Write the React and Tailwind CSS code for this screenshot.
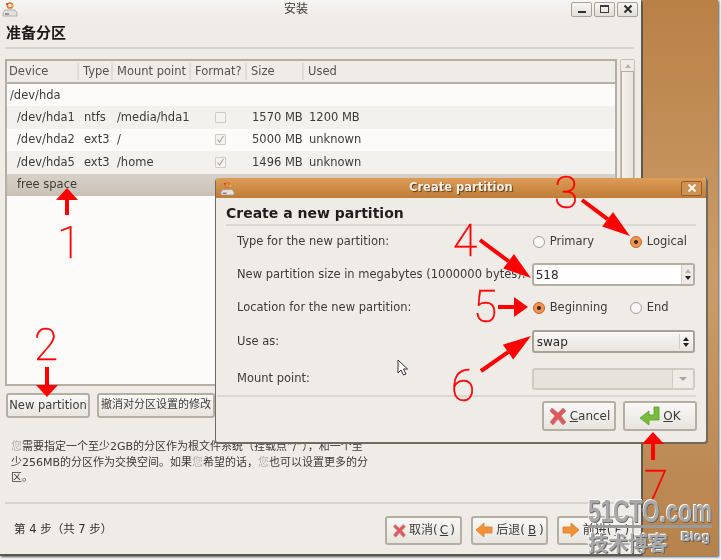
import React from "react";

const sans = "font-['DejaVu_Sans','Noto_Sans_CJK_SC',sans-serif]";

const RedX = ({ s = 20 }) => (
  <svg width={s} height={s} viewBox="0 0 20 20" className="shrink-0">
    <path d="M4 2 L10 7 L15 2 L18 5 L13 10 L18 16 L15 19 L10 13 L5 19 L2 16 L7 10 L2 5 Z" fill="#e0575c" stroke="#c9888a" strokeWidth="1" />
  </svg>
);
const OrangeArrow = ({ right }) => (
  <svg width="18" height="16" viewBox="0 0 18 16" className="shrink-0">
    <path d={right ? "M1 5 H9 V1 L17 8 L9 15 V11 H1 Z" : "M17 5 H9 V1 L1 8 L9 15 V11 H17 Z"} fill="#f0913a" stroke="#d97f2c" strokeWidth="0.8" />
  </svg>
);
const GreenEnter = () => (
  <svg width="22" height="22" viewBox="0 0 22 22" className="shrink-0">
    <path d="M15 2 H20 V15 H10 V20 L1 13 L10 6 V10 H15 Z" fill="#79bd3c" stroke="#5b9a26" strokeWidth="0.8" />
  </svg>
);
const DriveIcon = ({ s = 16 }) => (
  <svg width={s} height={s} viewBox="0 0 16 16" className="shrink-0">
    <circle cx="8" cy="4.5" r="2.6" fill="none" stroke="#e0772d" strokeWidth="1.5" />
    <circle cx="5" cy="3" r="1" fill="#d9352a" />
    <circle cx="11" cy="5" r="1" fill="#f2c230" />
    <path d="M3 9 H13 L15 12 V15 H1 V12 Z" fill="#e4e2dc" stroke="#8d8a82" strokeWidth="0.6" />
    <path d="M3 13 H7" stroke="#445" strokeWidth="1" />
  </svg>
);

const Btn = ({ className = "", children }) => (
  <div className={`flex items-center justify-center rounded-[3px] border-2 border-[#b5aea2] bg-gradient-to-b from-[#f9f8f6] to-[#e8e5df] text-[#3c3b37] ${className}`}>
    {children}
  </div>
);

const WinBtn = ({ children, className = "" }) => (
  <div className={`flex h-[15px] w-[21px] items-center justify-center rounded-[2px] border border-[#a8a296] bg-gradient-to-b from-[#f7f6f3] to-[#e3dfd8] ${className}`}>
    {children}
  </div>
);

const Check = ({ checked }) => (
  <div className="flex h-[11px] w-[11px] items-center justify-center rounded-[1px] border border-[#cfcac2] bg-[#f5f3f0]">
    {checked && (
      <svg width="9" height="9" viewBox="0 0 9 9">
        <path d="M1.5 4.5 L3.5 7 L7.5 1" fill="none" stroke="#a9a59d" strokeWidth="1.1" />
      </svg>
    )}
  </div>
);

const Row = ({ bg, dev, type, mount, fmt, size, used, text = "text-[#3c3b37]" }) => (
  <div className={`flex h-[22.4px] items-center text-[11.5px] ${bg} ${text}`}>
    <div className="w-[77px] whitespace-nowrap pl-[10px]">{dev}</div>
    <div className="w-[33px]">{type}</div>
    <div className="w-[75px] whitespace-nowrap">{mount}</div>
    <div className="flex w-[56px] justify-center">{fmt !== undefined && <Check checked={fmt} />}</div>
    <div className="w-[61px] whitespace-nowrap pl-[4px]">{size}</div>
    <div className="whitespace-nowrap">{used}</div>
  </div>
);

const Head = ({ w, pl = "pl-[4px]", children }) => (
  <div className={`flex h-[17px] items-center border-r-2 border-[#e0dcd5] ${pl} ${w}`}>{children}</div>
);

const Radio = ({ on, label, w }) => (
  <div className={`flex items-center gap-[5px] ${w}`}>
    {on ? (
      <div className="flex h-[12px] w-[12px] items-center justify-center rounded-full border border-[#c4682a] bg-[#f29350]">
        <div className="h-[4px] w-[4px] rounded-full bg-[#2e2a26]" />
      </div>
    ) : (
      <div className="h-[12px] w-[12px] rounded-full border border-[#a59f94] bg-[#f8f7f5]" />
    )}
    <span>{label}</span>
  </div>
);

const DialogRow = ({ label, children, h = "h-[33px]" }) => (
  <div className={`flex items-center pl-[21px] pr-[11px] ${h}`}>
    <div className="w-[296px] whitespace-nowrap">{label}</div>
    <div className="w-[164px]">{children}</div>
  </div>
);

const Num = ({ children, className }) => (
  <div className={`absolute font-['Roboto',sans-serif] font-thin text-[44px] leading-none text-[#f00] [-webkit-text-stroke:0.6px_#f00] ${className}`}>
    {children}
  </div>
);

const Arrow = ({ x1, y1, x2, y2, l = 15, w = 9 }) => {
  const a = Math.atan2(y2 - y1, x2 - x1);
  const bx = x2 - l * Math.cos(a);
  const by = y2 - l * Math.sin(a);
  const nx = -Math.sin(a) * w;
  const ny = Math.cos(a) * w;
  return (
    <g>
      <line x1={x1} y1={y1} x2={bx} y2={by} stroke="#f00" strokeWidth="4" />
      <polygon points={`${x2},${y2} ${bx + nx},${by + ny} ${bx - nx},${by - ny}`} fill="#f00" />
    </g>
  );
};

export default function App() {
  return (
    <div className={`relative h-[560px] w-[721px] overflow-hidden bg-[#f4f4f4] ${sans} blur-[0.35px]`}>
      <div className="h-[556px] w-[718px] bg-gradient-to-b from-[#b98146] via-[#cb9c69] to-[#b6824c] shadow-[1px_1px_2px_#555]">
        {/* main window */}
        <div className="flex h-[556px] w-[643px] flex-col rounded-tr-[4px] border-r-2 border-b-2 border-[#5b5850] bg-[#efebe7] text-[#3c3b37]">
          <div className="flex h-[18px] items-center bg-gradient-to-b from-[#f7f6f4] to-[#efebe7] pl-[2px] pr-[3px]">
            <DriveIcon />
            <div className="flex-1 pl-[266px] text-[12px] text-[#3c3b37]">安装</div>
            <div className="flex gap-[2px]">
              <WinBtn>
                <div className="mt-[6px] h-[2px] w-[8px] bg-[#2e2e2e]" />
              </WinBtn>
              <WinBtn>
                <div className="h-[8px] w-[9px] border border-t-2 border-[#3a3a3a]" />
              </WinBtn>
              <WinBtn>
                <svg width="10" height="10" viewBox="0 0 10 10">
                  <path d="M1.5 1.5 L8.5 8.5 M8.5 1.5 L1.5 8.5" stroke="#2e2e2e" strokeWidth="2" />
                </svg>
              </WinBtn>
            </div>
          </div>
          <div className="flex h-[29px] items-center pl-[6px] pt-[2px] text-[15px] font-bold text-[#1c1b18]">准备分区</div>
          <div className="mx-[5px] mr-[7px] h-[2px] bg-[#d8d3cb]" />

          <div className="mt-[10px] flex h-[327px] gap-[3px] px-[5px]">
            <div className="flex w-[612px] flex-col border-2 border-[#b5aea2] bg-[#fcfbfa]">
              <div className="flex h-[23px] items-center border-b-2 border-[#b5aea2] bg-[#efebe7] text-[11.5px] text-[#55524c]">
                <Head w="w-[72px]" pl="pl-[2px]">Device</Head>
                <Head w="w-[34px]">Type</Head>
                <Head w="w-[78px]">Mount point</Head>
                <Head w="w-[56px]">Format?</Head>
                <Head w="w-[57px]">Size</Head>
                <div className="pl-[4px]">Used</div>
              </div>
              <div className="flex h-[22.4px] items-center bg-[#fcfbfa] pl-[3px] text-[11.5px]">/dev/hda</div>
              <Row bg="bg-[#f3f1ed]" dev="/dev/hda1" type="ntfs" mount="/media/hda1" fmt={false} size="1570 MB" used="1200 MB" />
              <Row bg="bg-[#fcfbfa]" dev="/dev/hda2" type="ext3" mount="/" fmt={true} size="5000 MB" used="unknown" />
              <Row bg="bg-[#f3f1ed]" dev="/dev/hda5" type="ext3" mount="/home" fmt={true} size="1496 MB" used="unknown" />
              <Row bg="bg-gradient-to-b from-[#d8d1c7] to-[#c9c1b6]" dev="free space" />
            </div>
            <div className="flex w-[15px] flex-col rounded-[2px] border border-[#c5bfb5] bg-[#dcd8d1]">
              <div className="flex h-[11px] items-center justify-center bg-[#efebe7]">
                <div className="h-0 w-0 border-x-[3px] border-b-[4px] border-x-transparent border-b-[#b9b4ab]" />
              </div>
              <div className="h-[120px] border border-[#b5aea2] bg-gradient-to-r from-[#f4f2ee] to-[#e6e2db]" />
            </div>
          </div>

          <div className="mt-[7px] flex gap-[7px] pl-[6px] text-[11.5px]">
            <Btn className="h-[25px] w-[84px]">New partition</Btn>
            <Btn className="h-[25px] w-[118px] whitespace-nowrap text-[11px]">撤消对分区设置的修改</Btn>
          </div>

          <div className="mt-[21px] h-[48px] w-[369px] pl-[11px] text-[11px] leading-[15.5px]">
            <span className="text-[#b5b0a8]">您</span>需要指定一个至少2GB的分区作为根文件系统（挂载点“/”），和一个至少256MB的分区作为交换空间。如果
            <span className="text-[#b5b0a8]">您</span>希望的话，
            <span className="text-[#b5b0a8]">您</span>也可以设置更多的分区。
          </div>

          <div className="mx-[5px] mt-[15px] h-[2px] bg-[#d8d3cb]" />

          <div className="flex flex-1 items-center justify-between pl-[14px] pr-[7px] pt-[2px] text-[11.5px]">
            <div className="whitespace-pre text-[#2f2e2a]">第 4 步（共 7 步）</div>
            <div className="flex gap-[9px] text-[12px]">
              <Btn className="h-[29px] w-[77px] gap-[2px]"><RedX s={15} />取消(<u>C</u>)</Btn>
              <Btn className="h-[29px] w-[77px] gap-[3px]"><OrangeArrow />后退(<u>B</u>)</Btn>
              <Btn className="h-[29px] w-[77px] gap-[3px]"><OrangeArrow right />前进(<u>F</u>)</Btn>
            </div>
          </div>
        </div>
      </div>

      {/* dialog */}
      <div className="absolute left-[215px] top-[178px] flex h-[266px] w-[493px] flex-col rounded-[4px] border-r-2 border-b-2 border-l border-[#6f6a60] bg-[#efebe7] text-[11.5px] text-[#3c3b37]">
        <div className="flex h-[20px] items-center rounded-t-[4px] bg-gradient-to-b from-[#dd9c57] to-[#c07c37] pl-[4px] pr-[4px]">
          <DriveIcon s={15} />
          <div className="flex-1 pl-[174px] text-[11.5px] font-bold text-[#f6efe6] [text-shadow:1px_1px_1px_#5a3a18]">Create partition</div>
          <div className="flex h-[15px] w-[21px] items-center justify-center rounded-[2px] border border-[#8f5f2c] bg-[#cf9254]">
            <svg width="10" height="10" viewBox="0 0 10 10">
              <path d="M1.5 1.5 L8.5 8.5 M8.5 1.5 L1.5 8.5" stroke="#fbf6ef" strokeWidth="2" />
            </svg>
          </div>
        </div>
        <div className="flex h-[26px] items-center pl-[10px] pt-[5px] text-[14px] font-bold text-[#1f1e1b]">Create a new partition</div>
        <div className="mx-[10px] h-[2px] bg-[#dcd8d1]" />
        <div className="flex flex-col">
          <DialogRow label="Type for the new partition:" h="h-[32px]">
            <div className="flex pl-[1px]">
              <Radio label="Primary" w="w-[97px]" />
              <Radio on label="Logical" />
            </div>
          </DialogRow>
          <DialogRow label="New partition size in megabytes (1000000 bytes):">
            <div className="flex h-[23px] overflow-hidden rounded-[3px] border-2 border-[#b5aea2] bg-white pl-[2px]">
              <div className="flex-1 self-center text-[12px] text-[#2a2a28]">518</div>
              <div className="flex w-[12px] flex-col items-center justify-around border-l border-[#cfcac2] bg-[#efebe7] py-[2px]">
                <div className="h-0 w-0 border-x-[3px] border-b-[4px] border-x-transparent border-b-[#b5b0a8]" />
                <div className="h-0 w-0 border-x-[3px] border-t-[4px] border-x-transparent border-t-[#222]" />
              </div>
            </div>
          </DialogRow>
          <DialogRow label="Location for the new partition:">
            <div className="flex pl-[1px]">
              <Radio on label="Beginning" w="w-[97px]" />
              <Radio label="End" />
            </div>
          </DialogRow>
          <DialogRow label="Use as:" h="h-[35px]">
            <div className="flex h-[23px] items-center rounded-[3px] border-2 border-[#a9a296] bg-gradient-to-b from-[#f8f7f5] to-[#e9e6e0] pl-[3px] pr-[2px]">
              <div className="flex-1 text-[12px] text-[#2a2a28]">swap</div>
              <div className="flex h-[15px] w-[12px] flex-col items-center justify-center gap-[2px] border-l border-[#cfcac2]">
                <div className="h-0 w-0 border-x-[3px] border-b-[4px] border-x-transparent border-b-[#222]" />
                <div className="h-0 w-0 border-x-[3px] border-t-[4px] border-x-transparent border-t-[#222]" />
              </div>
            </div>
          </DialogRow>
          <DialogRow label="Mount point:" h="h-[36px] pt-[4px]">
            <div className="flex h-[22px] items-center justify-end rounded-[3px] border-2 border-[#d0cbc2] bg-[#e6e3dd]">
              <div className="flex h-full w-[21px] items-center justify-center border-l border-[#cfcac2] bg-[#efebe7]">
                <div className="h-0 w-0 border-x-[4px] border-t-[4px] border-x-transparent border-t-[#a9a59d]" />
              </div>
            </div>
          </DialogRow>
        </div>
        <div className="ml-[1px] mr-[10px] h-[2px] bg-[#dcd8d1]" />
        <div className="mt-[4px] flex justify-end gap-[7px] pr-[9px] text-[12px]">
          <Btn className="h-[30px] w-[74px] gap-[2px]"><RedX />
            <span><u>C</u>ancel</span>
          </Btn>
          <Btn className="h-[30px] w-[74px] gap-[2px]"><GreenEnter />
            <span><u>O</u>K</span>
          </Btn>
        </div>
      </div>

      {/* mouse pointer */}
      <svg className="absolute left-[396px] top-[359px]" width="14" height="18" viewBox="0 0 14 18">
        <path d="M2 1 L2 14 L5 11 L7.5 16 L10 15 L7.5 10 L11.5 10 Z" fill="#fff" stroke="#333" strokeWidth="1" />
      </svg>

      {/* annotations */}
      <svg className="absolute left-0 top-0" width="721" height="560" viewBox="0 0 721 560">
        <Arrow x1={67} y1={215} x2={67} y2={188} l={12} w={11} />
        <Arrow x1={47} y1={367} x2={47} y2={397} l={12} w={11} />
        <Arrow x1={582} y1={200} x2={630} y2={236} l={28} w={9} />
        <Arrow x1={480} y1={240} x2={531} y2={278} l={28} w={9} />
        <Arrow x1={498} y1={307} x2={528} y2={307} l={14} w={10} />
        <Arrow x1={481} y1={371} x2={531} y2={336} l={28} w={9} />
        <Arrow x1={653} y1={460} x2={653} y2={432} l={12} w={11} />
      </svg>
      <Num className="left-[57px] top-[221px]">1</Num>
      <Num className="left-[34px] top-[323px]">2</Num>
      <Num className="left-[554px] top-[171px]">3</Num>
      <Num className="left-[453px] top-[219px]">4</Num>
      <Num className="left-[473px] top-[285px]">5</Num>
      <Num className="left-[451px] top-[364px]">6</Num>
      <Num className="left-[644px] top-[465px]">7</Num>

      {/* watermark */}
      <div className="absolute left-[588px] top-[495px] origin-left scale-x-[0.7] font-['Liberation_Sans',sans-serif] text-[32px] font-bold leading-none text-[#a9a9a9] [text-shadow:1px_1px_0_#666,-1px_-1px_0_#fff]">51CTO.com</div>
      <div className="absolute left-[588px] top-[525px] h-[3px] w-[124px] bg-[#9a9a9a]" />
      <div className="absolute left-[588px] top-[533px] font-['Noto_Sans_CJK_SC',sans-serif] text-[20px] font-bold leading-none text-[#a9a9a9] [text-shadow:1px_1px_0_#666,-1px_-1px_0_#fff]">技术博客</div>
      <div className="absolute left-[681px] top-[530px] font-['Liberation_Sans',sans-serif] text-[13px] font-bold leading-none text-[#a9a9a9] [text-shadow:1px_1px_0_#666,-1px_-1px_0_#fff]">Blog</div>
    </div>
  );
}
